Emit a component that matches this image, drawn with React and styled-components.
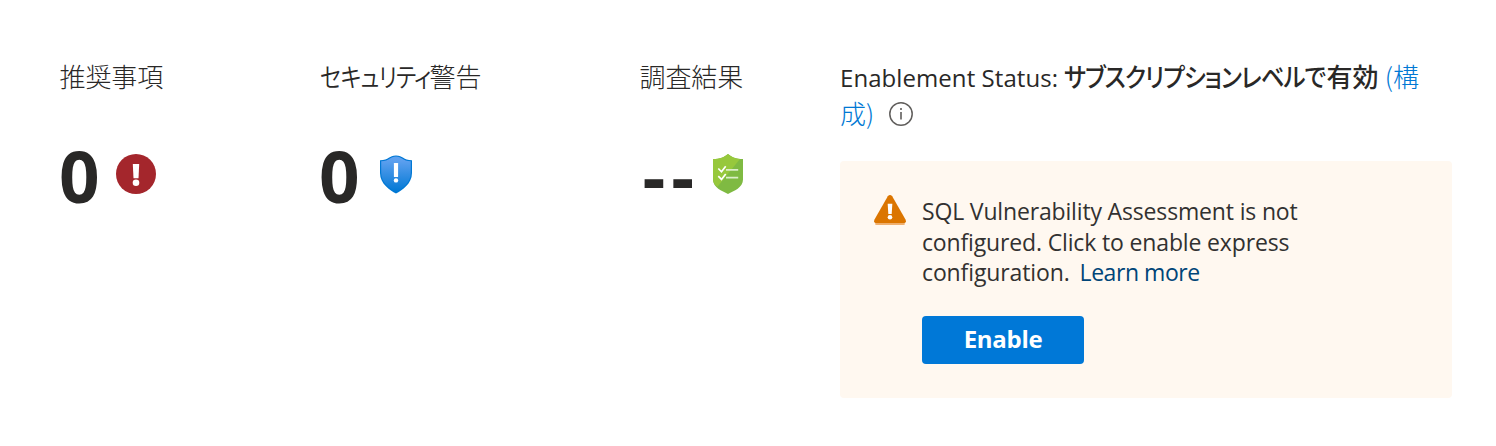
import React from 'react';
import styled, { createGlobalStyle } from 'styled-components';

const GlobalStyle = createGlobalStyle`
  body {
    margin: 0;
    background: #fff;
    color: #292827;
    font-family: "Open Sans", "Noto Sans CJK JP", sans-serif;
  }
`;

const Page = styled.main`
  display: flex;
  box-sizing: border-box;
  height: 446px;
  padding: 57px 44px 48px 59.5px;
`;

const Metric = styled.section`
  flex: none;
  width: ${(p) => p.$width}px;
`;

const Label = styled.h2`
  margin: 0;
  height: 37px;
  font-family: "Noto Sans CJK JP", sans-serif;
  font-size: 26px;
  font-weight: 300;
  line-height: 37px;
  letter-spacing: -0.1px;
  white-space: nowrap;
`;

const Kana = styled.span`
  display: inline-block;
  width: ${(p) => p.$width}px;
  font-feature-settings: "palt";
  font-weight: ${(p) => p.$weight};
  letter-spacing: -1px;
  transform: scaleX(${(p) => p.$scale});
  transform-origin: left;
`;

const ValueRow = styled.div`
  display: flex;
  align-items: flex-start;
  margin-top: 43px;
  height: 76px;
  svg {
    flex: none;
    margin: ${(p) => p.$iconMargin};
  }
`;

const Value = styled.span`
  flex: none;
  font-family: "Open Sans", sans-serif;
  font-size: 71px;
  font-weight: 700;
  line-height: 78px;
  letter-spacing: ${(p) => p.$spacing || 0}px;
  text-indent: ${(p) => p.$indent || 0}px;
  white-space: nowrap;
  width: ${(p) => p.$width}px;
`;

const Details = styled.section`
  flex: 1;
  min-width: 0;
`;

const Status = styled.p`
  box-sizing: border-box;
  margin: 0;
  padding-top: 2px;
  height: 104px;
  font-size: 24px;
  font-weight: 300;
  line-height: 37px;
  white-space: nowrap;
  svg {
    margin-left: 15px;
    vertical-align: -2px;
  }
`;

const StatusName = styled.span`
  font-weight: 400;
  line-height: 0;
  letter-spacing: 0.07px;
`;

const StatusValue = styled.strong`
  font-family: "Noto Sans CJK JP", sans-serif;
  font-size: 26px;
  font-weight: 500;
  line-height: 0;
`;

const ConfigureLink = styled.a`
  font-family: "Noto Sans CJK JP", sans-serif;
  font-size: 26px;
  line-height: 0;
  color: #0078d4;
`;

const Notice = styled.div`
  display: flex;
  align-items: flex-start;
  box-sizing: border-box;
  height: 237px;
  padding: 34px;
  border-radius: 4px;
  background: #fff8f0;
`;

const NoticeBody = styled.div`
  margin: 1px 0 0 16px;
`;

const NoticeText = styled.p`
  margin: 0;
  color: #323130;
  font-size: 23px;
  line-height: 30.6px;
  white-space: nowrap;
`;

const Line = styled.span`
  letter-spacing: ${(p) => p.$spacing}px;
`;

const LearnLink = styled.a`
  margin-left: 10px;
  letter-spacing: -0.45px;
  color: #004578;
`;

const EnableButton = styled.button`
  display: block;
  width: 162px;
  height: 48px;
  margin-top: 28px;
  padding: 0 0 2px;
  border: 0;
  border-radius: 4px;
  background: #0078d7;
  color: #fff;
  font-family: "Open Sans", sans-serif;
  font-size: 24px;
  font-weight: 700;
  line-height: 46px;
  letter-spacing: -0.3px;
`;

const AlertIcon = () => (
  <svg width="40" height="40" viewBox="0 0 40 40">
    <circle cx="20" cy="20" r="20" fill="#a4262c" />
    <path d="M16.8 10h6.4l-.7 14.2h-5z" fill="#fff" />
    <circle cx="20" cy="28.7" r="3.3" fill="#fff" />
  </svg>
);

const ShieldAlertIcon = () => (
  <svg width="32" height="39" viewBox="0 0 32 39">
    <defs>
      <linearGradient id="blueShield" x1="0" y1="0" x2="0" y2="1">
        <stop offset="0.1" stopColor="#5ea0ef" />
        <stop offset="1" stopColor="#0078d4" />
      </linearGradient>
    </defs>
    <path d="M0 5.3C9 5 9 .4 16 .4S23 5 32 5.300V18c0 11-10 17-16 20.600C10 35 0 29 0 18z" fill="#0078d4" />
    <path d="M1.200 6.300C9.500 6 10 1.500 16 1.500S22.500 6 30.800 6.300V18c0 10-9 15.600-14.800 19.100C10.200 33.600 1.200 28 1.200 18z" fill="url(#blueShield)" />
    <rect x="13.900" y="8" width="4.200" height="14" rx="0.500" fill="#fff" />
    <circle cx="16" cy="25.400" r="2.200" fill="#fff" />
  </svg>
);

const ShieldChecklistIcon = () => (
  <svg width="30" height="40" viewBox="0 0 30 40">
    <path d="M0 5C7 5 11.500 3 15 0c3.500 3 8 5 15 5v20.500C30 33.500 21 37 15 40 9 37 0 33.500 0 25.500z" fill="#7fba42" />
    <path d="M0 5C7 5 11.500 3 15 0c3.500 3 7 4.500 12 4.900L4.500 32.700C1.800 30.800 0 28.500 0 25.500z" fill="#97c83c" />
    <path d="M5.300 14.500l3.200 3.300 4.200-5.500M5.300 22.100l3.200 3.300 4.200-5.500" fill="none" stroke="#fff" strokeWidth="1.700" />
    <path d="M13 15.900h12.200M13 23.700h12.200" stroke="#dceec8" strokeWidth="1.800" />
  </svg>
);

const InfoIcon = () => (
  <svg width="24" height="24" viewBox="0 0 24 24">
    <circle cx="12" cy="12" r="11.200" fill="none" stroke="#605e5c" strokeWidth="1.500" />
    <path d="M12 10v7.500M12 6v2" stroke="#605e5c" strokeWidth="1.600" />
  </svg>
);

const WarningIcon = () => (
  <svg width="32" height="30" viewBox="0 0 32 30">
    <path d="M1 28.200h30v.3q0 1.500-1.500 1.500h-27Q1 30 1 28.500z" fill="#f0b070" />
    <path d="M13.800 1.300q2.200-2.600 4.400 0l13.300 23.200q1.400 3.500-2 3.700h-27q-3.400-.2-2-3.700z" fill="#db7500" />
    <path d="M13.700 8.700h4.600L17.700 19h-3.400z" fill="#fff" />
    <circle cx="16" cy="22.200" r="2.300" fill="#fff" />
  </svg>
);

export default function App() {
  return (
    <Page>
      <GlobalStyle />
      <Metric $width={260}>
        <Label>推奨事項</Label>
        <ValueRow $iconMargin="17px 0 0 16.5px">
          <Value $width={40} $indent={-0.5}>0</Value>
          <AlertIcon />
        </ValueRow>
      </Metric>
      <Metric $width={320}>
        <Label><Kana $width={110} $scale={0.86} $weight={350}>セキュリティ</Kana>警告</Label>
        <ValueRow $iconMargin="18px 0 0 20.5px">
          <Value $width={40} $indent={-0.5}>0</Value>
          <ShieldAlertIcon />
        </ValueRow>
      </Metric>
      <Metric $width={200.5}>
        <Label>調査結果</Label>
        <ValueRow $iconMargin="17px 0 0 15.5px">
          <Value $width={58} $spacing={6} $indent={3}>--</Value>
          <ShieldChecklistIcon />
        </ValueRow>
      </Metric>
      <Details>
        <Status>
          <StatusName>Enablement Status: </StatusName>
          <StatusValue><Kana $width={262} $scale={0.9} $weight={500}>サブスクリプションレベルで</Kana>有効</StatusValue>{' '}
          <ConfigureLink>(構<br />成)</ConfigureLink>
          <InfoIcon />
        </Status>
        <Notice>
          <WarningIcon />
          <NoticeBody>
            <NoticeText>
              <Line $spacing={-0.16}>SQL Vulnerability Assessment is not</Line><br />
              <Line $spacing={-0.15}>configured. Click to enable express</Line><br />
              <Line $spacing={-0.12}>configuration.</Line>
              <LearnLink>Learn more</LearnLink>
            </NoticeText>
            <EnableButton>Enable</EnableButton>
          </NoticeBody>
        </Notice>
      </Details>
    </Page>
  );
}
